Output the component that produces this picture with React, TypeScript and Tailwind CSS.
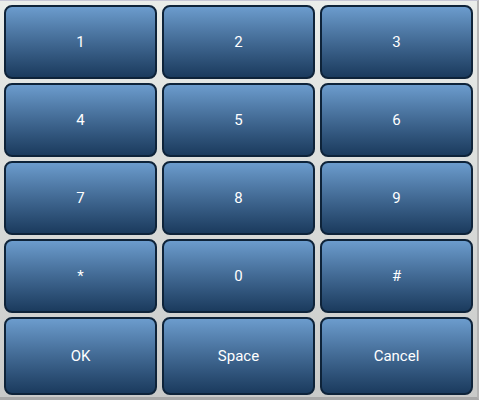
const keys = ['1', '2', '3', '4', '5', '6', '7', '8', '9', '*', '0', '#', 'OK', 'Space', 'Cancel'];

export default function App() {
  return (
    <div className="h-[400px] w-[479px] overflow-hidden border-t border-r-2 border-b-[3px] border-t-[#c6c6d6] border-r-[#b4b4b4] border-b-[#a9a9a9] bg-gradient-to-b from-[#eaedea] to-[#c9cac9] font-['Roboto',sans-serif]">
      <div className="grid grid-cols-[153px_153px_153px] grid-rows-[74px_74px_74px_74px_78px] gap-x-[5px] gap-y-[4px] pl-[4px] pt-[4px]">
        {keys.map((k) => (
          <button
            key={k}
            className="flex items-center justify-center rounded-[8px] border-2 border-[#0e2339] bg-gradient-to-b from-[#6c9ccd] to-[#1b3b5e] text-[15px] text-white"
          >
            {k}
          </button>
        ))}
      </div>
    </div>
  );
}
